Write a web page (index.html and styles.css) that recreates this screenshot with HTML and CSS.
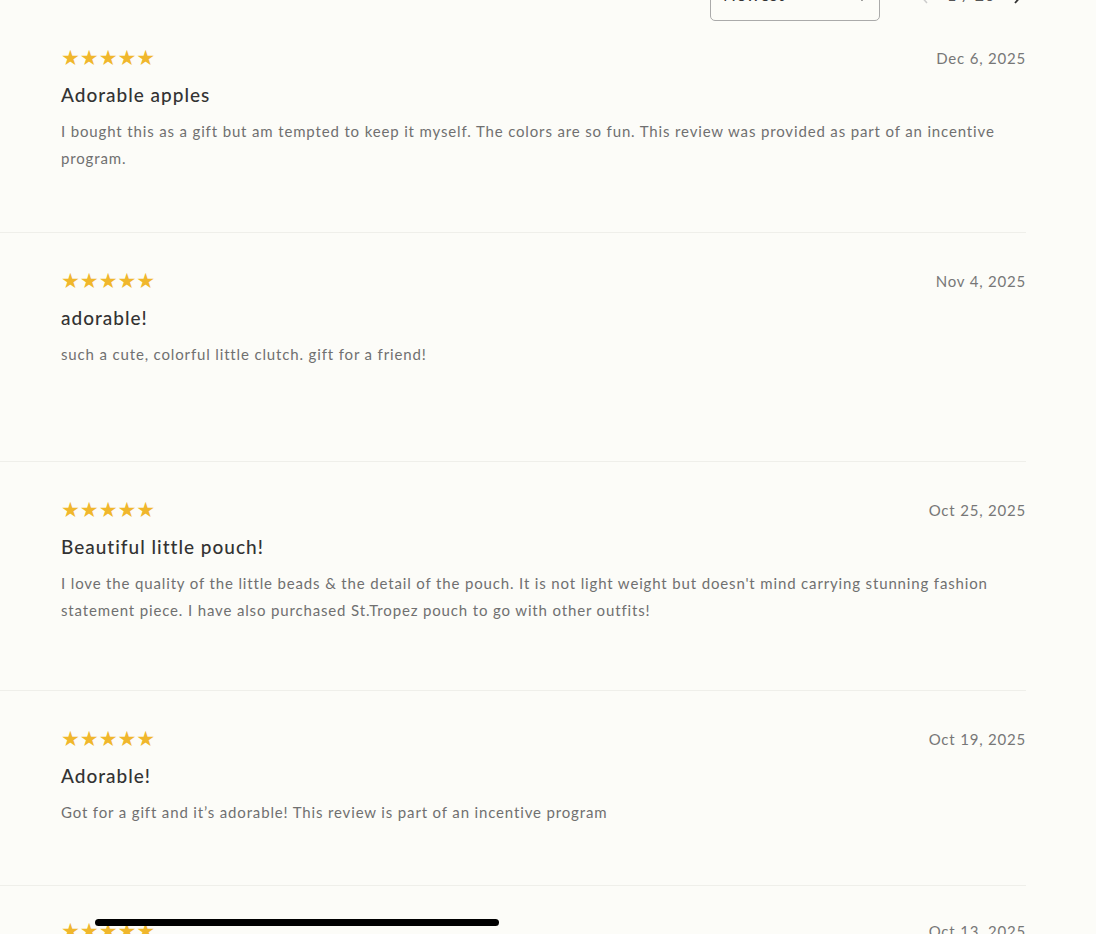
FILE: index.html
```html
<!DOCTYPE html>
<html lang="en">

<head>
    <meta charset="UTF-8">
    <meta name="viewport" content="width=device-width, initial-scale=1.0">
    <title>Reviews</title>
    <link rel="stylesheet" href="styles.css">
</head>

<body>
    <div class="reviews">
        <div class="reviews-header">
            <div class="sort-select">
                <span>Newest</span>
                <svg class="sort-arrows" width="10" height="16" viewBox="0 0 10 16">
                    <polyline points="2,5 5,2 8,5" fill="none" stroke="#555" stroke-width="1.5" />
                    <polyline points="2,11 5,14 8,11" fill="none" stroke="#555" stroke-width="1.5" />
                </svg>
            </div>
            <div class="pager">
                <svg class="pager-arrow" width="12" height="22" viewBox="0 0 12 22">
                    <polyline points="10,2 2,11 10,20" fill="none" stroke="#ccc" stroke-width="1.5" />
                </svg>
                <span class="pager-count">1 / 20</span>
                <svg class="pager-arrow" width="12" height="22" viewBox="0 0 12 22">
                    <polyline points="2,2 10,11 2,20" fill="none" stroke="#333" stroke-width="1.8" />
                </svg>
            </div>
        </div>

        <div class="review review--first">
            <div class="review-top">
                <div class="stars">★★★★★</div>
                <div class="review-date">Dec 6, 2025</div>
            </div>
            <h3 class="review-title">Adorable apples</h3>
            <p class="review-body">I bought this as a gift but am tempted to keep it myself. The colors are so fun. This review was provided as part of an incentive program.</p>
        </div>

        <div class="review">
            <div class="review-top">
                <div class="stars">★★★★★</div>
                <div class="review-date">Nov 4, 2025</div>
            </div>
            <h3 class="review-title">adorable!</h3>
            <p class="review-body">such a cute, colorful little clutch. gift for a friend!</p>
        </div>

        <div class="review">
            <div class="review-top">
                <div class="stars">★★★★★</div>
                <div class="review-date">Oct 25, 2025</div>
            </div>
            <h3 class="review-title">Beautiful little pouch!</h3>
            <p class="review-body">I love the quality of the little beads &amp; the detail of the pouch. It is not light weight but doesn't mind carrying stunning fashion statement piece. I have also purchased St.Tropez pouch to go with other outfits!</p>
        </div>

        <div class="review review--short">
            <div class="review-top">
                <div class="stars">★★★★★</div>
                <div class="review-date">Oct 19, 2025</div>
            </div>
            <h3 class="review-title">Adorable!</h3>
            <p class="review-body">Got for a gift and it’s adorable! This review is part of an incentive program</p>
        </div>

        <div class="review review--last">
            <div class="review-top">
                <div class="stars">★★★★★</div>
                <div class="review-date">Oct 13, 2025</div>
            </div>
            <h3 class="review-title">So cute!</h3>
            <p class="review-body">Love it.</p>
        </div>
    </div>

    <div class="home-bar"></div>
</body>

</html>
```

FILE: styles.css
```css
body {
    margin: 0;
    background-color: #fcfcf8;
    font-family: 'Lato', 'Noto Sans', sans-serif;
    color: #333;
    overflow: hidden;
}

.reviews {
    width: 1026px;
}

.reviews-header {
    display: flex;
    justify-content: flex-end;
    align-items: center;
    height: 54px;
    margin-top: -33px;
    padding-right: 1px;
}

.sort-select {
    display: flex;
    align-items: center;
    justify-content: space-between;
    width: 170px;
    height: 54px;
    padding: 0 12px;
    box-sizing: border-box;
    border: 1px solid #aaa;
    border-radius: 5px;
    font-size: 17px;
    letter-spacing: 0.8px;
    color: #333;
}

.pager {
    display: flex;
    align-items: center;
    gap: 18px;
    margin-left: 37px;
}

.pager-count {
    font-size: 16px;
    color: #555;
    letter-spacing: 0.8px;
}

.review {
    box-sizing: border-box;
    min-height: 229px;
    padding: 39px 0 20px 61px;
    border-bottom: 1px solid #efefea;
}

.review--first {
    min-height: 212px;
    padding-top: 28px;
}

.review--short {
    min-height: 195px;
}

.review--last {
    padding-top: 36px;
}

.review-top {
    display: flex;
    justify-content: space-between;
    align-items: center;
    height: 19px;
}

.stars {
    color: #f0b72c;
    font-family: 'DejaVu Sans', sans-serif;
    font-size: 21px;
    letter-spacing: 0;
    line-height: 19px;
}

.review-date {
    font-size: 15px;
    color: #777;
    letter-spacing: 0.8px;
    margin-top: -1px;
}

.review-title {
    margin: 17px 0 0;
    font-size: 19px;
    font-weight: 500;
    line-height: 19px;
    letter-spacing: 1px;
    color: #333;
}

.review-body {
    margin: 14px 0 0;
    font-size: 15px;
    line-height: 27px;
    letter-spacing: 0.85px;
    color: #707070;
    padding-right: 10px;
}

.home-bar {
    position: fixed;
    left: 95px;
    top: 919px;
    width: 404px;
    height: 7px;
    border-radius: 4px;
    background: #000;
}
```
